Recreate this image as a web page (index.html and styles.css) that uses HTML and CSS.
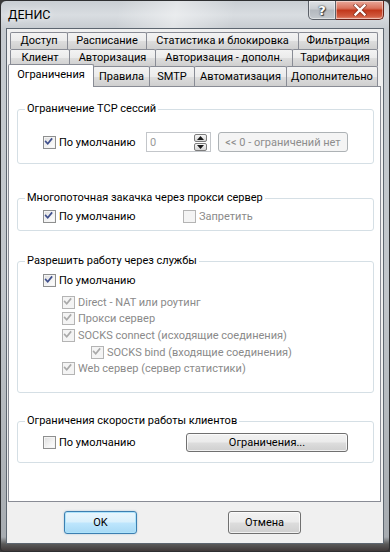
FILE: index.html
```html
<!DOCTYPE html>
<html>
<head>
<meta charset="utf-8">
<link rel="stylesheet" href="styles.css">
</head>
<body>
<div class="window">
  <div class="titlebar">
    <span class="title">ДЕНИС</span>
    <div class="caption-btns">
      <div class="cbtn help"><span class="qmark">?</span></div>
      <div class="cbtn close">
        <svg width="14" height="12" viewBox="0 0 14 12"><path d="M2.5 1.5 L11.5 10.5 M11.5 1.5 L2.5 10.5" stroke="#5a1c12" stroke-width="4" stroke-linecap="square" fill="none" opacity="0.55"/><path d="M2.5 1.5 L11.5 10.5 M11.5 1.5 L2.5 10.5" stroke="#ffffff" stroke-width="2.4" stroke-linecap="square" fill="none"/></svg>
      </div>
    </div>
  </div>
  <div class="client">
    <div class="tabs">
      <div class="tabrow">
        <div class="tab w58">Доступ</div>
        <div class="tab w80">Расписание</div>
        <div class="tab w153">Статистика и блокировка</div>
        <div class="tab w80">Фильтрация</div>
      </div>
      <div class="tabrow">
        <div class="tab w60">Клиент</div>
        <div class="tab w87">Авторизация</div>
        <div class="tab w138">Авторизация - дополн.</div>
        <div class="tab w86">Тарификация</div>
      </div>
      <div class="tabrow front">
        <div class="tab selected w86">Ограничения</div>
        <div class="tab w57">Правила</div>
        <div class="tab w46">SMTP</div>
        <div class="tab w93">Автоматизация</div>
        <div class="tab w92">Дополнительно</div>
      </div>
    </div>
    <div class="panel">
      <div class="group g1">
        <span class="legend">Ограничение TCP сессий</span>
        <div class="row row-tall">
          <label class="check w103"><span class="cb"><svg viewBox="0 0 13 13"><path d="M3 6.3 L5.4 9 L10 3.4" class="tick"/></svg></span><span>По умолчанию</span></label>
          <div class="spin">
            <span class="spin-val">0</span>
            <div class="spin-btns">
              <div class="sbtn"><svg width="7" height="4" viewBox="0 0 7 4"><path d="M0 4 L3.5 0 L7 4 Z" fill="#1a1a1a"/></svg></div>
              <div class="sbtn"><svg width="7" height="4" viewBox="0 0 7 4"><path d="M0 0 L3.5 4 L7 0 Z" fill="#1a1a1a"/></svg></div>
            </div>
          </div>
          <div class="btn disabled w130">&lt;&lt; 0 - ограничений нет</div>
        </div>
      </div>

      <div class="group g2">
        <span class="legend">Многопоточная закачка через прокси сервер</span>
        <div class="row">
          <label class="check w140"><span class="cb"><svg viewBox="0 0 13 13"><path d="M3 6.3 L5.4 9 L10 3.4" class="tick"/></svg></span><span>По умолчанию</span></label>
          <label class="check dis"><span class="cb"></span><span>Запретить</span></label>
        </div>
      </div>

      <div class="group g3">
        <span class="legend">Разрешить работу через службы</span>
        <div class="row">
          <label class="check"><span class="cb"><svg viewBox="0 0 13 13"><path d="M3 6.3 L5.4 9 L10 3.4" class="tick"/></svg></span><span>По умолчанию</span></label>
        </div>
        <div class="sublist">
          <div class="row sub lvl1"><label class="check dis"><span class="cb"><svg viewBox="0 0 13 13"><path d="M3 6.3 L5.4 9 L10 3.4" class="tick"/></svg></span><span>Direct - NAT или роутинг</span></label></div>
          <div class="row sub lvl1"><label class="check dis"><span class="cb"><svg viewBox="0 0 13 13"><path d="M3 6.3 L5.4 9 L10 3.4" class="tick"/></svg></span><span>Прокси сервер</span></label></div>
          <div class="row sub lvl1"><label class="check dis"><span class="cb"><svg viewBox="0 0 13 13"><path d="M3 6.3 L5.4 9 L10 3.4" class="tick"/></svg></span><span>SOCKS connect (исходящие соединения)</span></label></div>
          <div class="row sub lvl2"><label class="check dis"><span class="cb"><svg viewBox="0 0 13 13"><path d="M3 6.3 L5.4 9 L10 3.4" class="tick"/></svg></span><span>SOCKS bind (входящие соединения)</span></label></div>
          <div class="row sub lvl1"><label class="check dis"><span class="cb"><svg viewBox="0 0 13 13"><path d="M3 6.3 L5.4 9 L10 3.4" class="tick"/></svg></span><span>Web сервер (сервер статистики)</span></label></div>
        </div>
      </div>

      <div class="group g4">
        <span class="legend">Ограничения скорости работы клиентов</span>
        <div class="row row-tall">
          <label class="check w143"><span class="cb"></span><span>По умолчанию</span></label>
          <div class="btn w162">Ограничения...</div>
        </div>
      </div>
    </div>
    <div class="footer">
      <div class="btn dlg default">OK</div>
      <div class="btn dlg">Отмена</div>
    </div>
  </div>
</div>
</body>
</html>
```

FILE: styles.css
```css
* { box-sizing: border-box; }
html, body { margin: 0; padding: 0; }
body {
  width: 390px;
  height: 552px;
  overflow: hidden;
  background: #3a3a3a;
  font-family: Roboto, "Noto Sans", sans-serif;
  font-size: 11px;
  color: #000;
}
.window {
  width: 390px;
  height: 552px;
  border: 1px solid #2e2f31;
  border-radius: 6px 6px 4px 4px;
  padding: 0 5px 7px 5px;
  display: flex;
  flex-direction: column;
  background:
    linear-gradient(100deg, rgba(255,255,255,0) 30%, rgba(255,255,255,0.45) 45%, rgba(255,255,255,0) 60%) 0 0 / 100% 28px no-repeat,
    linear-gradient(to bottom, #c9ced3 0px, #d9dde1 14px, #c6cbd0 28px, #c0c5ca 300px, #a7acb1 536px, #5a5a5a 543px, #3b3434 551px);
}
.titlebar {
  height: 27px;
  flex: none;
  display: flex;
  align-items: flex-start;
  padding-left: 2px;
}
.title {
  font-size: 12.5px;
  line-height: 16px;
  margin-top: 6px;
  color: #000;
  text-shadow: 0 0 6px rgba(255,255,255,0.9);
}
.caption-btns {
  margin-left: auto;
  display: flex;
  height: 19px;
}
.cbtn {
  height: 19px;
  border: 1px solid #5b6068;
  border-top: none;
  display: flex;
  align-items: center;
  justify-content: center;
  box-shadow: inset 0 0 0 1px rgba(255,255,255,0.45);
}
.help {
  width: 28px;
  border-radius: 0 0 0 5px;
  background: linear-gradient(to bottom, #dfe2e6 0%, #c8ccd1 45%, #b3b8be 50%, #c4c9ce 100%);
}
.qmark {
  font-family: "DejaVu Sans", sans-serif;
  font-weight: bold;
  font-size: 13px;
  line-height: 13px;
  color: #fff;
  text-shadow: 0 0 1px #3c4046, 0 0 2px #3c4046, 1px 1px 1px #3c4046;
}
.close {
  width: 48px;
  border-left: none;
  border-color: #6b2319;
  border-radius: 0 0 5px 0;
  background: linear-gradient(to bottom, #e9a99a 0%, #d9735d 40%, #c2381c 52%, #d15a3f 85%, #e7917b 100%);
}
.client {
  flex: 1;
  border: 1px solid #5d6670;
  background: #f0f0f0;
  display: flex;
  flex-direction: column;
}
.tabs {
  margin: 3px 4px 0 3px;
  display: flex;
  flex-direction: column;
  position: relative;
  z-index: 1;
}
.tabrow {
  display: flex;
  height: 17px;
}
.tabrow.front { height: 20px; }
.tab {
  flex: none;
  padding: 0;
  text-align: center;
  border: 1px solid #898c95;
  border-bottom: none;
  border-radius: 2px 2px 0 0;
  margin-left: -1px;
  background: linear-gradient(to bottom, #f3f3f3 0%, #ebebeb 50%, #dddddd 51%, #cfcfcf 100%);
  line-height: 16px;
  white-space: nowrap;
}
.tab:first-child { margin-left: 0; }
.tabrow.front .tab { line-height: 19px; }
.tab.selected {
  background: #fff;
  margin: -2px 0 -1px -2px;
  position: relative;
  z-index: 2;
  line-height: 18px;
  height: 23px;
}
.w46 { width: 46px; }
.w57 { width: 57px; }
.w58 { width: 58px; }
.w60 { width: 60px; }
.w80 { width: 80px; }
.w86 { width: 86px; }
.w87 { width: 87px; }
.w92 { width: 92px; }
.w93 { width: 93px; }
.w138 { width: 138px; }
.w153 { width: 153px; }
.panel {
  height: 416px;
  flex: none;
  margin: 0 2px 0 1px;
  border: 1px solid #898c95;
  background: #fff;
  padding: 0 6px 0 8px;
  display: flex;
  flex-direction: column;
}
.group {
  border: 1px solid #d5dfe5;
  border-radius: 3px;
  display: flex;
  flex-direction: column;
}
.legend {
  align-self: flex-start;
  margin: -9px 0 0 7px;
  padding: 0 2px;
  background: #fff;
  line-height: 16px;
  height: 16px;
  white-space: nowrap;
}
.g1 { margin-top: 22px; padding-bottom: 11px; }
.g1 .row { margin-top: 15px; }
.g2 { margin-top: 34px; padding-bottom: 6px; }
.g2 .row { margin-top: 2px; }
.g3 { margin-top: 30px; padding-bottom: 15px; }
.g3 > .row { margin-top: 3px; }
.g4 { margin-top: 28px; padding-bottom: 9px; }
.g4 .row { margin-top: 4px; }
.row {
  display: flex;
  align-items: center;
  height: 16px;
  padding-left: 25px;
}
.row-tall { height: 20px; }
.sublist { margin-top: 6px; display: flex; flex-direction: column; }
.row.sub { height: 16.6px; }
.row.lvl1 { padding-left: 44px; }
.row.lvl2 { padding-left: 73px; }
.check {
  display: flex;
  align-items: center;
  white-space: nowrap;
  flex: none;
}
.w103 { width: 103px; }
.w140 { width: 140px; }
.w143 { width: 143px; }
.cb {
  width: 13px;
  height: 13px;
  border: 1px solid #8e8f8f;
  background: linear-gradient(135deg, #dcdcdc 0%, #f4f4f4 60%, #ffffff 100%);
  box-shadow: inset 0 0 0 1px #f4f4f4;
  margin-right: 3px;
  flex: none;
  display: flex;
}
.cb svg { width: 11px; height: 11px; }
.tick {
  fill: none;
  stroke: #3f4f8c;
  stroke-width: 2;
  stroke-linecap: square;
  transform: translate(-1px, -1px);
}
.check.dis { color: #8a8a8a; }
.check.dis .cb {
  border-color: #b4b4b4;
  background: #f4f4f4;
  box-shadow: none;
}
.check.dis .tick { stroke: #a9a9a9; }
.spin {
  width: 65px;
  height: 20px;
  border: 1px solid #c3c6ca;
  background: #fff;
  display: flex;
  align-items: center;
  padding-left: 3px;
  padding-right: 3px;
}
.spin-val { color: #9a9a9a; flex: 1; }
.spin-btns {
  display: flex;
  flex-direction: column;
  gap: 1px;
}
.sbtn {
  width: 13px;
  height: 8px;
  border: 1px solid #7d7d7d;
  border-radius: 2px;
  background: linear-gradient(to bottom, #f6f6f6, #d6d6d6);
  display: flex;
  align-items: center;
  justify-content: center;
}
.btn {
  height: 19px;
  border: 1px solid #707070;
  border-radius: 3px;
  background: linear-gradient(to bottom, #f2f2f2 0%, #ebebeb 48%, #dddddd 52%, #cfcfcf 100%);
  box-shadow: inset 0 0 0 1px rgba(255,255,255,0.7);
  display: flex;
  align-items: center;
  justify-content: center;
  white-space: nowrap;
  flex: none;
}
.btn.disabled {
  height: 20px;
  margin-left: 7px;
  border-color: #adb2b5;
  background: #f4f4f4;
  box-shadow: none;
  color: #8d8d8d;
}
.w130 { width: 130px; }
.w162 { width: 162px; }
.footer {
  display: flex;
  padding: 9px 0 0 57px;
  gap: 91px;
}
.btn.dlg {
  width: 73px;
  height: 23px;
}
.btn.default {
  border-color: #3c7fb1;
  background: linear-gradient(to bottom, #eaf6fd 0%, #d9f0fc 48%, #bee6fd 52%, #a7d9f5 100%);
  box-shadow: inset 0 0 0 1px #aee3fb, 0 0 2px rgba(60,127,177,0.4);
}
```
